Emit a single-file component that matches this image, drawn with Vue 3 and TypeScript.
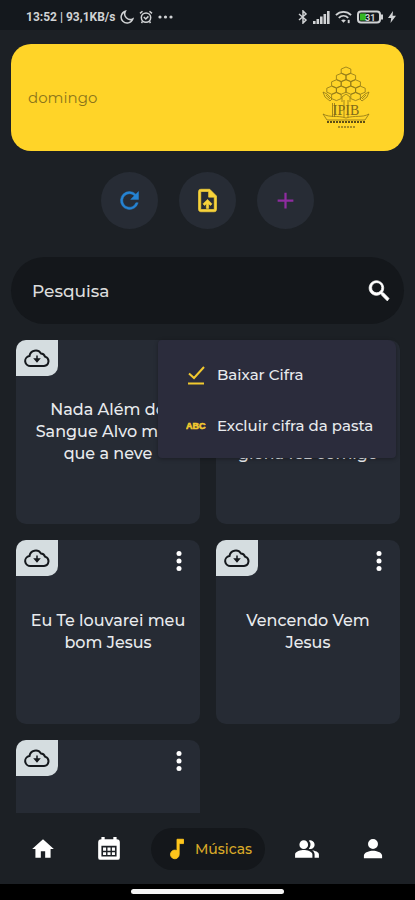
<script setup lang="ts">
import { ref } from 'vue'

interface Song {
  id: number
  lines: string[]
  last?: boolean
}

const search = ref('')
const menuOpen = ref(true)

const songs: Song[] = [
  { id: 1, lines: ['Nada Além do', 'Sangue Alvo mais', 'que a neve'] },
  { id: 2, lines: ['glória fez comigo'], last: true },
  { id: 3, lines: ['Eu Te louvarei meu', 'bom Jesus'] },
  { id: 4, lines: ['Vencendo Vem', 'Jesus'] },
  { id: 5, lines: [] },
]

// Honeycomb rows of the emblem, from the top down.
const rows = [1, 2, 3, 4]
const cells = rows.flatMap((count, row) =>
  Array.from({ length: count }, (_, i) => ({
    x: 25 + (i - (count - 1) / 2) * 9.6,
    y: 5 + row * 6.4,
  })),
).concat([
  { x: 15.4, y: 30.6 },
  { x: 34.6, y: 30.6 },
])
</script>

<template>
  <div class="screen">
    <header class="status">
      <div class="status-left">
        <span>13:52 | 93,1KB/s</span>
        <svg width="14" height="14" viewBox="0 0 14 14" class="line"><path d="M5.3 1.3A6 6 0 1 0 12.8 9 5.7 5.7 0 0 1 5.3 1.3Z" /></svg>
        <svg class="line" width="14" height="14" viewBox="0 0 14 14"><circle cx="7" cy="7.6" r="4.7" /><path d="M1 3.400 3.500 1.200M13 3.400 10.500 1.200M4.800 7l2 2 2.600-2.600M3.500 11.400 2.500 13M10.500 11.400l1 1.600" /></svg>
        <svg width="15" height="14" viewBox="0 0 15 14" fill="currentColor"><circle cx="2" cy="7" r="1.600" /><circle cx="7.500" cy="7" r="1.600" /><circle cx="13" cy="7" r="1.600" /></svg>
      </div>
      <div class="status-right">
        <svg class="line" width="10" height="14" viewBox="0 0 10 14"><path d="M1 4l7 6-3 3V1l3 3-7 6" /></svg>
        <svg width="17" height="13" viewBox="0 0 17 13" fill="currentColor"><path d="M0 10h2.600v3H0zM3.500 8h2.600v5H3.500zM7 5.500h2.600V13H7zM10.500 3h2.600v10h-2.600zM14 0h2.600v13H14z" /></svg>
        <svg width="17" height="14" viewBox="0 0 18 14" fill="none" stroke="currentColor" stroke-width="2"><path d="M1 5c4.500-4.500 11.500-4.500 16 0M4 8c3-3 7-3 10 0" /><path d="M6.500 10.500c1.500-1.300 3.500-1.300 5 0L9 13z" fill="currentColor" stroke="none" /><path d="M14.500 10v3.500" /></svg>
        <svg width="26" height="14" viewBox="0 0 26 14"><rect x="1" y="1.500" width="22" height="11" rx="3" fill="none" stroke="currentColor" stroke-width="2" /><path d="M24 4.500h2v5h-2z" fill="currentColor" /><path d="M3 3.500h6v7H3z" fill="#35b522" /><text x="8" y="10.500" class="charge">31</text></svg>
        <svg width="8" height="12" viewBox="0 0 8 12" fill="currentColor"><path d="M5 0 0 7h3.200L2.500 12 8 4.800H4.600z" /></svg>
      </div>
    </header>

    <main class="content">
      <section class="banner">
        <span>domingo</span>
        <svg class="emblem" width="50" height="64" viewBox="0 0 50 64" aria-hidden="true">
          <path v-for="(c, i) in cells" :key="i" :transform="`translate(${c.x} ${c.y})`" d="M0-4 4.800-2V2L0 4-4.800 2V-2Z" />
          <path d="M2 26l4 2 5 5-2 2-5-4zM48 26l-4 2-5 5 2 2 5-4zM21 36v-5l4-3 4 3v5M5 29l4 4M45 29l-4 4" />
          <path d="M11.500 37v14M13.500 37v14M23 34v17M27 34v17" />
          <text x="25" y="49" text-anchor="middle">IPIB</text>
          <path d="M2 48c7 4 14 1 23 4 9-3 16 0 23-4l-4 6H6z" />
          <path class="band" d="M6 56h38" />
          <path class="caption" d="M17 61h17" />
        </svg>
      </section>

      <div class="actions">
        <button type="button" class="round blue" aria-label="Atualizar">
          <svg viewBox="0 0 24 24"><path d="M17.650 6.350A7.960 7.960 0 0 0 12 4a8 8 0 1 0 7.730 10h-2.080A6 6 0 1 1 12 6c1.660 0 3.140.69 4.220 1.780L13 11h7V4z" stroke="currentColor" stroke-width=".4" /></svg>
        </button>
        <button type="button" class="round yellow" aria-label="Enviar arquivo">
          <svg viewBox="0 0 24 24"><path d="M14 2H6a2 2 0 0 0-2 2v16c0 1.100.890 2 1.990 2H18a2 2 0 0 0 2-2V8zm4 18H6V4h7v5h5zM8 15.010l1.410 1.410L11 14.840V19h2v-4.160l1.590 1.590L16 15.010 12.010 11z" stroke="currentColor" stroke-width=".6" /></svg>
        </button>
        <button type="button" class="round purple" aria-label="Adicionar">
          <svg viewBox="0 0 24 24"><path d="M19 13h-6v6h-2v-6H5v-2h6V5h2v6h6z" /></svg>
        </button>
      </div>

      <form class="search" @submit.prevent>
        <input v-model="search" type="text" placeholder="Pesquisa" aria-label="Pesquisa" />
        <button type="submit" aria-label="Pesquisar">
          <svg viewBox="0 0 24 24"><path d="M15.500 14h-.790l-.280-.270A6.500 6.500 0 1 0 13 15.110l.970.390v.790l5 4.990L20.490 19zm-6 0a4.500 4.500 0 1 1 0-9 4.500 4.500 0 0 1 0 9z" stroke="currentColor" stroke-width=".6" /></svg>
        </button>
      </form>

      <section class="songs">
        <article v-for="song in songs" :key="song.id" class="card">
          <button type="button" class="badge" aria-label="Baixar">
            <svg width="26" height="20" viewBox="0 0 26 20"><path d="M7 18h13a4.800 4.800 0 0 0 1-9.400A4.500 4.500 0 0 0 17 5.500 6.300 6.300 0 0 0 5.500 8 5 5 0 0 0 7 18Z" /><path d="M13 7.500v6M10.800 11l2.200 2.600 2.200-2.600z" class="arrow" /></svg>
          </button>
          <button type="button" class="more" aria-label="Opções" @click="menuOpen = !menuOpen">
            <svg width="6" height="22" viewBox="0 0 6 22" fill="currentColor"><circle cx="3" cy="3.500" r="2.500" /><circle cx="3" cy="11" r="2.500" /><circle cx="3" cy="18.500" r="2.500" /></svg>
          </button>
          <h2 :class="{ last: song.last }"><span v-for="line in song.lines" :key="line">{{ line }}</span></h2>
        </article>

        <div v-if="menuOpen" class="menu">
          <button type="button">
            <svg width="20" height="20" viewBox="0 0 20 20"><path d="M3 8.500l5 4.500L18 2M2 18.500h16" /></svg>
            <span>Baixar Cifra</span>
          </button>
          <button type="button">
            <svg width="20" height="20" viewBox="0 0 20 20"><text x="0" y="13">ABC</text></svg>
            <span>Excluir cifra da pasta</span>
          </button>
        </div>
      </section>
    </main>

    <nav class="tabs">
      <a href="#inicio" aria-label="Início"><svg viewBox="0 0 24 24"><path d="M10 20v-6h4v6h5v-8h3L12 3 2 12h3v8z" /></svg></a>
      <a href="#agenda" aria-label="Agenda"><svg viewBox="0 0 24 24"><path fill-rule="evenodd" d="M5 3V1h3v2h8V1h3v2a3 3 0 0 1 3 3v14a2 2 0 0 1-2 2H4a2 2 0 0 1-2-2V6a3 3 0 0 1 3-3zM5 9v10h14V9zm1.500 1.500h2.800v3H6.500zm4.100 0h2.800v3h-2.800zm4.100 0h2.800v3h-2.800zM6.500 15h2.800v2.600H6.500zm4.100 0h2.800v2.600h-2.800zm4.100 0h2.800v2.600h-2.800z" /></svg></a>
      <a href="#musicas" class="active"><svg viewBox="0 0 24 24"><path d="M12 3v10.550A4 4 0 1 0 14 17V7h4V3z" stroke="currentColor" stroke-width=".8" /></svg><span>Músicas</span></a>
      <a href="#grupos" aria-label="Grupos"><svg viewBox="0 0 24 24"><path d="M16.670 13.130C18.040 14.060 19 15.320 19 17v3h4v-3c0-2.180-3.570-3.470-6.330-3.870zM15 12a4 4 0 1 0-1.330-7.760 5.980 5.980 0 0 1 0 7.520c.420.140.860.240 1.330.240zM9 12a4 4 0 1 0 0-8 4 4 0 0 0 0 8zm0 1c-2.670 0-8 1.340-8 4v3h16v-3c0-2.660-5.330-4-8-4z" /></svg></a>
      <a href="#perfil" aria-label="Perfil"><svg viewBox="0 0 24 24"><path d="M12 12a4.600 4.600 0 1 0 0-9.200 4.600 4.600 0 0 0 0 9.200zm0 1.500c-3 0-8.400 1.340-8.400 4.500v2.500h16.800V18c0-3.160-5.400-4.500-8.400-4.500z" /></svg></a>
    </nav>
    <footer class="gesture"><div></div></footer>
  </div>
</template>

<style>
body {
  background: #1c2025;
}
</style>

<style scoped>
.screen {
  display: flex;
  flex-direction: column;
  height: 100vh;
  overflow: hidden;
  background: #1c2025;
  color: #e8eaed;
  font-family: Montserrat, Inter, sans-serif;
  font-weight: 500;
}
button,
input {
  padding: 0;
  border: 0;
  background: none;
  color: inherit;
  font: inherit;
}
svg {
  display: block;
  flex: none;
}
.status {
  display: flex;
  justify-content: space-between;
  align-items: center;
  flex: none;
  height: 30px;
  padding: 4px 19px 0 26px;
  box-sizing: border-box;
  background: #14181d;
  color: #d0d2d4;
  font: bold 12px Roboto, sans-serif;
}
.status-left,
.status-right {
  display: flex;
  align-items: center;
  gap: 5px;
}
.line {
  fill: none;
  stroke: currentColor;
  stroke-width: 1.5;
}
.charge {
  fill: #d0d2d4;
  font: bold 9px Roboto, sans-serif;
}
.content {
  flex: 1;
  min-height: 0;
  overflow: hidden;
  padding: 14px 11px 0;
}
.banner {
  display: flex;
  align-items: center;
  justify-content: space-between;
  height: 107px;
  padding: 0 33px 0 17px;
  box-sizing: border-box;
  border-radius: 20px;
  background: #ffd428;
  color: #8b741b;
  font-size: 15px;
  font-weight: 400;
}
.emblem {
  fill: none;
  stroke: #8c7518;
  stroke-width: 0.8;
}
.emblem text {
  fill: #806a18;
  stroke: none;
  font: 14px "Liberation Serif", serif;
}
.emblem .band {
  stroke: #5e4e16;
  stroke-width: 2;
  stroke-dasharray: 2 1;
}
.emblem .caption {
  stroke: #a98d20;
  stroke-width: 2;
  stroke-dasharray: 2 1;
}
.actions {
  display: flex;
  justify-content: center;
  gap: 21px;
  margin: 21px 0 28px;
}
.round {
  display: grid;
  place-items: center;
  width: 57px;
  height: 57px;
  border-radius: 50%;
  background: #272c35;
}
.round svg,
.search svg {
  width: 27px;
  height: 27px;
  fill: currentColor;
}
.blue {
  color: #2583d3;
}
.yellow {
  color: #f8d33a;
}
.purple {
  color: #8e2ca0;
}
.search {
  display: flex;
  align-items: center;
  height: 67px;
  padding: 0 11px 0 21px;
  border-radius: 34px;
  background: #14171b;
}
.search input {
  flex: 1;
  min-width: 0;
  outline: 0;
  font-size: 17px;
}
.search input::placeholder {
  color: #dcdcdc;
  opacity: 1;
}
.search button {
  color: #fff;
}
.songs {
  position: relative;
  display: grid;
  grid-template-columns: 1fr 1fr;
  gap: 16px;
  padding: 16px 4px 0 5px;
}
.card {
  position: relative;
  display: grid;
  place-items: center;
  aspect-ratio: 1;
  border-radius: 10px;
  background: #262b34;
}
.badge {
  position: absolute;
  top: 0;
  left: 0;
  display: grid;
  place-items: center;
  width: 42px;
  height: 36px;
  border-radius: 10px 0;
  background: #d5dde0;
}
.badge svg {
  fill: none;
  stroke: #15191d;
  stroke-width: 2;
}
.badge .arrow {
  stroke-width: 1.5;
}
.more {
  position: absolute;
  top: 10px;
  right: 10px;
  display: grid;
  place-items: center;
  width: 22px;
  height: 22px;
  color: #fff;
}
h2 {
  display: flex;
  flex-direction: column;
  margin: 0;
  font-size: 16px;
  font-weight: 500;
  line-height: 22px;
  text-align: center;
  white-space: nowrap;
}
h2.last {
  justify-content: flex-end;
  height: 66px;
}
.menu {
  position: absolute;
  top: 16px;
  right: 8px;
  display: flex;
  flex-direction: column;
  width: 238px;
  padding: 9px 0 7px;
  box-sizing: border-box;
  border-radius: 4px 8px 4px 4px;
  background: #2b2c3c;
  box-shadow: 0 1px 4px rgba(0, 0, 0, 0.3);
}
.menu button {
  display: flex;
  align-items: center;
  gap: 11px;
  height: 51px;
  padding-left: 28px;
  font-size: 15px;
  white-space: nowrap;
}
.menu svg {
  fill: none;
  stroke: #f2c92f;
  stroke-width: 2;
}
.menu text {
  fill: #f2c92f;
  stroke: #f2c92f;
  stroke-width: 0.6;
  font: bold 9px "Liberation Sans", sans-serif;
}
.tabs {
  display: flex;
  align-items: center;
  justify-content: space-between;
  flex: none;
  height: 71px;
  padding: 0 18px 0 19px;
  background: #1c2025;
}
.tabs a {
  display: flex;
  align-items: center;
  justify-content: center;
  width: 48px;
  height: 42px;
  color: #fff;
  text-decoration: none;
}
.tabs svg {
  width: 26px;
  height: 26px;
  fill: currentColor;
}
.tabs .active {
  gap: 5px;
  width: 114px;
  border-radius: 21px;
  background: #14171b;
  color: #ffc61c;
}
.tabs .active span {
  color: #d9a928;
  font-size: 14px;
}
.gesture {
  display: flex;
  justify-content: center;
  flex: none;
  height: 16px;
  padding-top: 5px;
  box-sizing: border-box;
  background: #000;
}
.gesture div {
  width: 37%;
  height: 5px;
  border-radius: 3px;
  background: #f4f4f4;
}
</style>
